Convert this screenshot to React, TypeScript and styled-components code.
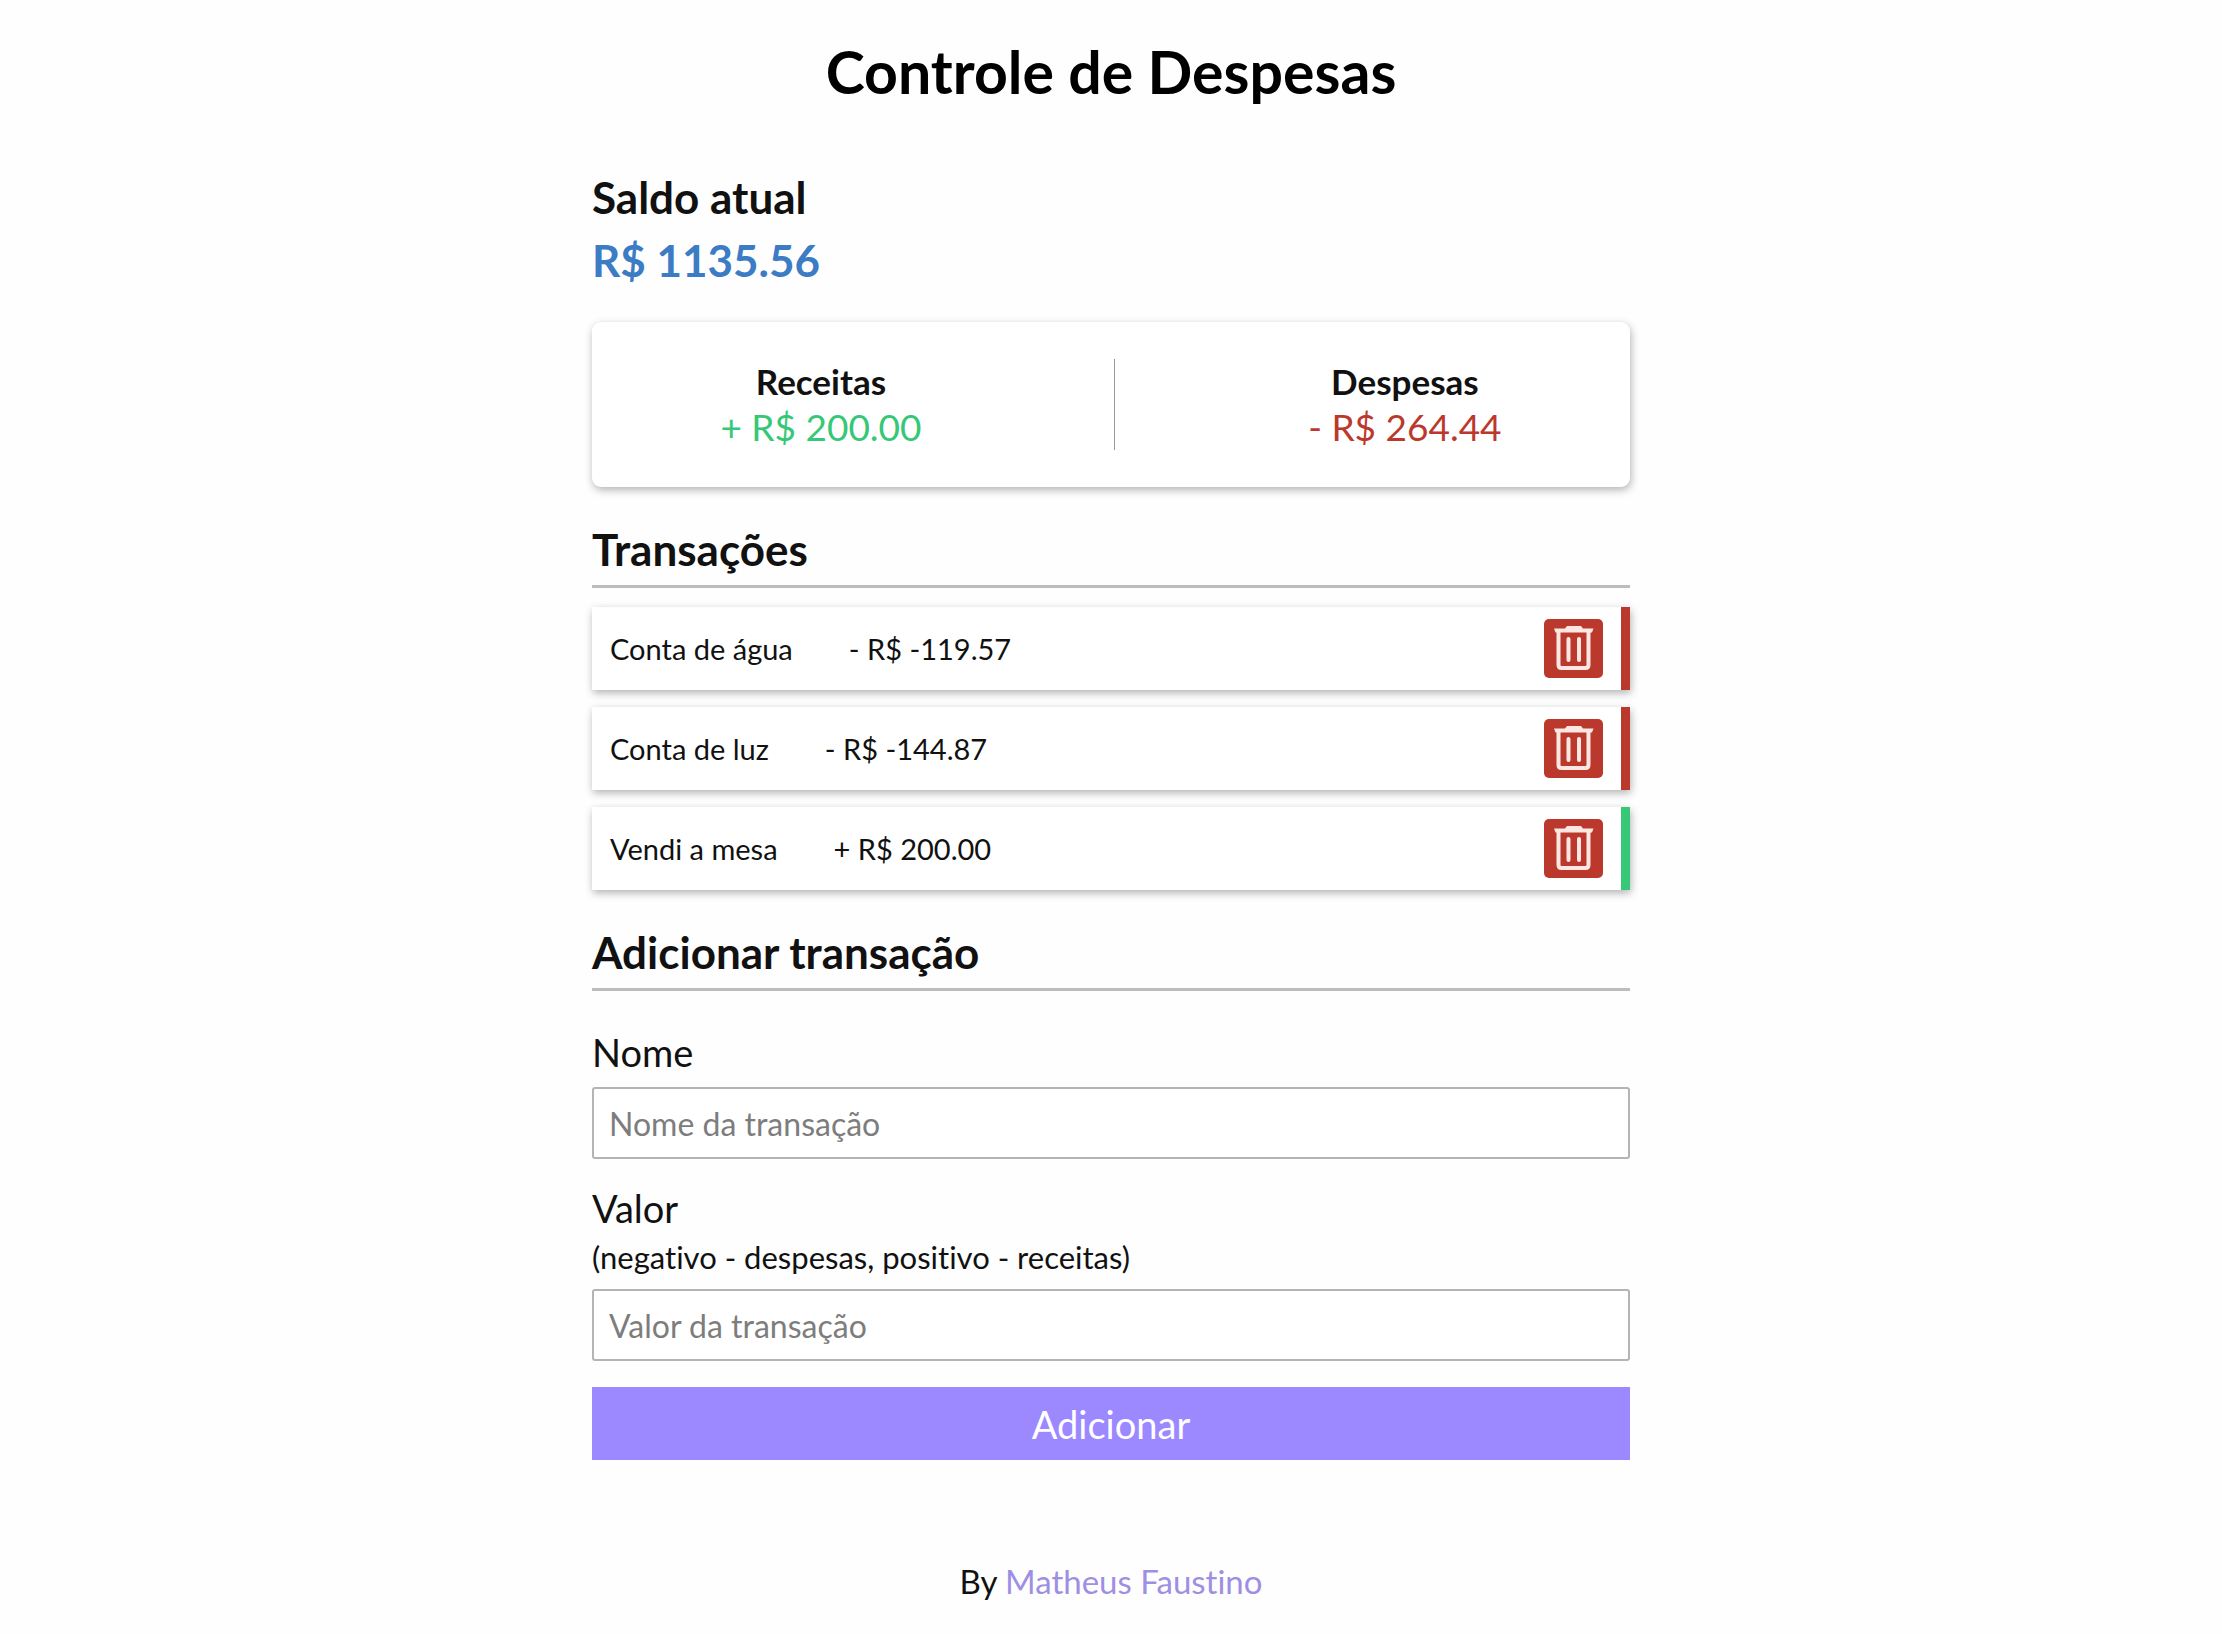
import React, { useState } from 'react';
import styled, { createGlobalStyle } from 'styled-components';

const GlobalStyle = createGlobalStyle`
  * { box-sizing: border-box; margin: 0; padding: 0; }
  body {
    background: #fefefe;
    color: #111;
    font-family: Lato, "Liberation Sans", sans-serif;
    font-size: 32px;
    line-height: 40px;
    font-variant-ligatures: none;
  }
`;

const shadow = '1px 3px 8px rgba(0, 0, 0, 0.3)';
const red = '#bb392c';
const green = '#36c777';

const Page = styled.div`
  display: flex;
  flex-direction: column;
  align-items: center;
  padding: 36px 16px;
`;

const Title = styled.h1`
  font-size: 59px;
  line-height: 72px;
  color: #000;
  text-align: center;
`;

const Content = styled.main`
  width: 100%;
  max-width: 1038px;
  margin-top: 63px;
`;

const Balance = styled.section`
  display: flex;
  flex-direction: column;
  gap: 10px;
  font-size: 44px;
  line-height: 53px;
`;

const BalanceTitle = styled.h2`
  font-size: inherit;
`;

const BalanceValue = styled.p`
  font-weight: 700;
  color: #3b7cc4;
`;

const Summary = styled.section`
  display: flex;
  justify-content: space-around;
  margin-top: 35px;
  padding: 37px 32px;
  background: #fff;
  border-radius: 9px;
  box-shadow: ${shadow};
`;

const SummaryItem = styled.div`
  text-align: center;
`;

const SummaryTitle = styled.h3`
  font-size: 35px;
  line-height: 45px;
`;

const SummaryValue = styled.p<{ $color: string }>`
  font-size: 37px;
  line-height: 46px;
  color: ${(p) => p.$color};
`;

const Divider = styled.div`
  width: 1px;
  background: #999;
`;

const SectionTitle = styled.h2`
  margin-top: 36px;
  padding-bottom: 9px;
  border-bottom: 3px solid #bcbcbe;
  font-size: 44px;
  line-height: 53px;
`;

const List = styled.ul`
  display: flex;
  flex-direction: column;
  gap: 17px;
  margin-top: 19px;
  list-style: none;
`;

const Row = styled.li<{ $color: string }>`
  display: flex;
  align-items: center;
  gap: 56px;
  padding: 12px 18px;
  background: #fff;
  border-right: 9px solid ${(p) => p.$color};
  box-shadow: ${shadow};
  font-size: 29px;
  line-height: 36px;
`;

const DeleteButton = styled.button`
  width: 59px;
  height: 59px;
  margin-left: auto;
  border: 0;
  border-radius: 5px;
  background: ${red};
  color: #fde7e2;
  cursor: pointer;

  svg { display: block; }
`;

const Form = styled.form`
  display: flex;
  flex-direction: column;
  gap: 26px;
  margin-top: 38px;
`;

const Field = styled.div`
  display: flex;
  flex-direction: column;
`;

const Label = styled.label`
  margin-bottom: 12px;
  font-size: 38px;
  line-height: 46px;
`;

const Hint = styled.small`
  display: block;
  padding-top: 6px;
  font-size: 31px;
  line-height: 40px;
`;

const Input = styled.input`
  width: 100%;
  height: 72px;
  padding: 0 15px;
  border: 2px solid #b4b4b8;
  border-radius: 3px;
  background: #fff;
  color: #111;
  font: inherit;
  &::placeholder { color: #7d7d7d; opacity: 1; }
`;

const SubmitButton = styled.button`
  height: 73px;
  border: 0;
  background: #9c88ff;
  color: #fff;
  font: inherit;
  font-size: 38px;
  cursor: pointer;
`;

const Footer = styled.footer`
  margin-top: 101px;
  font-size: 33px;
`;

const AuthorLink = styled.a`
  color: #9f8fe3;
  text-decoration: none;
`;

const TrashIcon = () => (
  <svg width="59" height="59" viewBox="0 0 59 59" fill="none" stroke="currentColor" aria-hidden="true">
    <path d="M10 9.500h11l2-2.500h14l2 2.500h10.500l-1.500 4h-36.500z" fill="currentColor" stroke="none" />
    <path d="M14.500 12v34q0 3 3 3h24q3 0 3-3V12" strokeWidth="4" />
    <path d="M24.500 20v21M35 20v21" strokeWidth="4" strokeLinecap="round" />
  </svg>
);

type Transaction = { id: number; name: string; amount: number };

const initial: Transaction[] = [
  { id: 1, name: 'Conta de água', amount: -119.57 },
  { id: 2, name: 'Conta de luz', amount: -144.87 },
  { id: 3, name: 'Vendi a mesa', amount: 200 },
];

export default function App() {
  const [items, setItems] = useState(initial);
  return (
    <>
      <GlobalStyle />
      <Page>
        <Title>Controle de Despesas</Title>
        <Content>
          <Balance>
            <BalanceTitle>Saldo atual</BalanceTitle>
            <BalanceValue>R$ 1135.56</BalanceValue>
          </Balance>
          <Summary>
            <SummaryItem>
              <SummaryTitle>Receitas</SummaryTitle>
              <SummaryValue $color={green}>+ R$ 200.00</SummaryValue>
            </SummaryItem>
            <Divider />
            <SummaryItem>
              <SummaryTitle>Despesas</SummaryTitle>
              <SummaryValue $color={red}>- R$ 264.44</SummaryValue>
            </SummaryItem>
          </Summary>
          <SectionTitle>Transações</SectionTitle>
          <List>
            {items.map((t) => (
              <Row key={t.id} $color={t.amount < 0 ? red : green}>
                <span>{t.name}</span>
                <span>{`${t.amount < 0 ? '-' : '+'} R$ ${t.amount.toFixed(2)}`}</span>
                <DeleteButton
                  type="button"
                  aria-label={`Remover ${t.name}`}
                  onClick={() => setItems(items.filter((i) => i.id !== t.id))}
                >
                  <TrashIcon />
                </DeleteButton>
              </Row>
            ))}
          </List>
          <SectionTitle>Adicionar transação</SectionTitle>
          <Form onSubmit={(e) => e.preventDefault()}>
            <Field>
              <Label htmlFor="name">Nome</Label>
              <Input id="name" type="text" placeholder="Nome da transação" />
            </Field>
            <Field>
              <Label htmlFor="amount">
                Valor
                <Hint>(negativo - despesas, positivo - receitas)</Hint>
              </Label>
              <Input id="amount" type="text" inputMode="decimal" placeholder="Valor da transação" />
            </Field>
            <SubmitButton type="submit">Adicionar</SubmitButton>
          </Form>
        </Content>
        <Footer>
          By <AuthorLink href="#">Matheus Faustino</AuthorLink>
        </Footer>
      </Page>
    </>
  );
}
